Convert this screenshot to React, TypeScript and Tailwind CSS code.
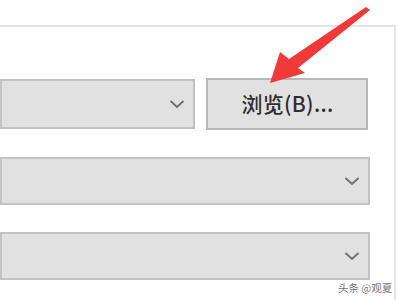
import React from "react";

function Chevron() {
  return (
    <svg width="16" height="10" viewBox="0 0 16 10" className="shrink-0">
      <path d="M1.5 2 L8 8 L14.5 2" fill="none" stroke="#6e6e6e" strokeWidth="1.8" />
    </svg>
  );
}

function Combo({ w, h }: { w: string; h: string }) {
  return (
    <div className={`${w} ${h} bg-[#e1e1e1] border-2 border-[#c3c3c3] flex items-center justify-end pr-[8px]`}>
      <Chevron />
    </div>
  );
}

export default function App() {
  return (
    <div className="relative w-[400px] h-[300px] bg-white overflow-hidden" style={{ fontFamily: '"Noto Sans CJK SC", "Noto Sans", sans-serif' }}>
      <div className="mt-[25px] w-[396px] h-[275px] border-t-2 border-r-2 border-[#e4e4e4] pt-[51px] flex flex-col">
        <div className="flex items-center gap-[11px]">
          <div className="w-[195px] h-[50px] bg-[#e1e1e1] border-2 border-[#c3c3c3] flex items-center justify-end pr-[8px]">
            <Chevron />
          </div>
          <div className="w-[162px] h-[52px] bg-[#e1e1e1] border-2 border-[#b8b8b8] flex items-center justify-center pl-[1px] text-[21px] font-medium text-[#2e2e2e] tracking-[0.3px]">
            浏览(B)...
          </div>
        </div>
        <div className="mt-[27px]">
          <Combo w="w-[370px]" h="h-[48px]" />
        </div>
        <div className="mt-[27px]">
          <Combo w="w-[370px]" h="h-[48px]" />
        </div>
      </div>
      <svg className="absolute left-0 top-0" width="400" height="300" viewBox="0 0 400 300">
        <polygon points="270,83 280,52 289,59 366,7 370,10 298,68 305,73" fill="#f03a3a" />
      </svg>
      <div className="absolute left-[338px] top-[281px] text-[10.5px] leading-[14px] text-[#777]">头条 @观夏</div>
    </div>
  );
}
